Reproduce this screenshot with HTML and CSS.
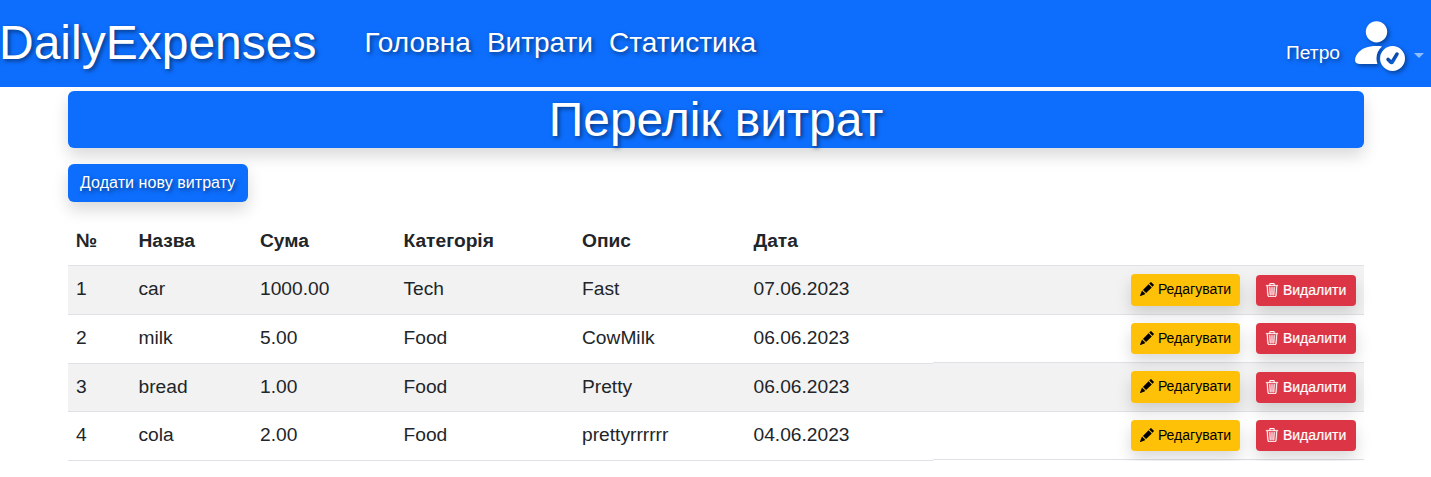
FILE: index.html
```html
<!DOCTYPE html>
<html lang="uk">
<head>
<meta charset="utf-8">
<title>DailyExpenses</title>
<link rel="stylesheet" href="styles.css">
</head>
<body>
<svg class="sprite" width="0" height="0" aria-hidden="true">
  <symbol id="pencil" viewBox="0 0 16 16"><path d="M12.854.146a.5.5 0 0 0-.707 0L10.5 1.793 14.207 5.5l1.647-1.646a.5.5 0 0 0 0-.708l-3-3zm.646 6.061L9.793 2.5 3.293 9H3.5a.5.5 0 0 1 .5.5v.5h.5a.5.5 0 0 1 .5.5v.5h.5a.5.5 0 0 1 .5.5v.5h.5a.5.5 0 0 1 .5.5v.207l6.5-6.5zm-7.468 7.468A.5.5 0 0 1 6 13.5V13h-.5a.5.5 0 0 1-.5-.5V12h-.5a.5.5 0 0 1-.5-.5V11h-.5a.5.5 0 0 1-.5-.5V10h-.5a.499.499 0 0 1-.175-.032l-.179.178a.5.5 0 0 0-.11.168l-2 5a.5.5 0 0 0 .65.65l5-2a.5.5 0 0 0 .168-.11l.178-.178z"/></symbol>
  <symbol id="trash" viewBox="0 0 16 16"><path d="M6.5 1h3a.5.5 0 0 1 .5.5v1H6v-1a.5.5 0 0 1 .5-.5ZM11 2.5v-1A1.5 1.5 0 0 0 9.5 0h-3A1.5 1.5 0 0 0 5 1.5v1H2.506a.58.58 0 0 0-.01 0H1.5a.5.5 0 0 0 0 1h.538l.853 10.66A2 2 0 0 0 4.885 16h6.23a2 2 0 0 0 1.994-1.84l.853-10.66h.538a.5.5 0 0 0 0-1h-.995a.59.59 0 0 0-.01 0H11Zm1.958 1-.846 10.58a1 1 0 0 1-.997.92h-6.23a1 1 0 0 1-.997-.92L3.042 3.5h9.916Zm-7.487 1a.5.5 0 0 1 .528.47l.5 8.5a.5.5 0 0 1-.998.06L5 5.03a.5.5 0 0 1 .47-.53Zm5.058 0a.5.5 0 0 1 .47.53l-.5 8.5a.5.5 0 1 1-.998-.06l.5-8.5a.5.5 0 0 1 .528-.47ZM8 4.5a.5.5 0 0 1 .5.5v8.5a.5.5 0 0 1-1 0V5a.5.5 0 0 1 .5-.5Z"/></symbol>
</svg>
<nav class="navbar">
  <a class="brand">DailyExpenses</a>
  <div class="links"><a>Головна</a><a>Витрати</a><a>Статистика</a></div>
  <div class="user">
    <span>Петро</span>
    <svg class="avatar" viewBox="0 0 16 16"><path d="M12.5 16a3.5 3.5 0 1 0 0-7 3.5 3.5 0 0 0 0 7Zm1.679-4.493-1.335 2.226a.75.75 0 0 1-1.174.144l-.774-.773a.5.5 0 0 1 .708-.708l.547.548 1.17-1.951a.5.5 0 1 1 .858.514ZM11 5a3 3 0 1 1-6 0 3 3 0 0 1 6 0Z"/><path d="M2 13c0 1 1 1 1 1h5.256A4.493 4.493 0 0 1 8 12.5a4.49 4.49 0 0 1 1.544-3.393C9.077 9.038 8.564 9 8 9c-5 0-6 3-6 4Z"/></svg>
    <i class="caret"></i>
  </div>
</nav>
<main class="container">
  <h1 class="title">Перелік витрат</h1>
  <a class="btn btn-primary">Додати нову витрату</a>
  <table class="table">
    <colgroup><col class="c-num"><col class="c-name"><col class="c-sum"><col class="c-cat"><col class="c-desc"><col class="c-date"><col></colgroup>
    <thead><tr><th>№</th><th>Назва</th><th>Сума</th><th>Категорія</th><th>Опис</th><th>Дата</th><th></th></tr></thead>
    <tbody>
      <tr><td>1</td><td>car</td><td>1000.00</td><td>Tech</td><td>Fast</td><td>07.06.2023</td><td><div class="actions"><a class="btn btn-sm btn-warning"><svg><use href="#pencil"/></svg> Редагувати</a><a class="btn btn-sm btn-danger"><svg><use href="#trash"/></svg> Видалити</a></div></td></tr>
      <tr><td>2</td><td>milk</td><td>5.00</td><td>Food</td><td>CowMilk</td><td>06.06.2023</td><td><div class="actions"><a class="btn btn-sm btn-warning"><svg><use href="#pencil"/></svg> Редагувати</a><a class="btn btn-sm btn-danger"><svg><use href="#trash"/></svg> Видалити</a></div></td></tr>
      <tr><td>3</td><td>bread</td><td>1.00</td><td>Food</td><td>Pretty</td><td>06.06.2023</td><td><div class="actions"><a class="btn btn-sm btn-warning"><svg><use href="#pencil"/></svg> Редагувати</a><a class="btn btn-sm btn-danger"><svg><use href="#trash"/></svg> Видалити</a></div></td></tr>
      <tr><td>4</td><td>cola</td><td>2.00</td><td>Food</td><td>prettyrrrrrr</td><td>04.06.2023</td><td><div class="actions"><a class="btn btn-sm btn-warning"><svg><use href="#pencil"/></svg> Редагувати</a><a class="btn btn-sm btn-danger"><svg><use href="#trash"/></svg> Видалити</a></div></td></tr>
    </tbody>
  </table>
</main>
</body>
</html>
```
FILE: styles.css
```css
* { box-sizing: border-box; }
body {
  margin: 0;
  background: #fff;
  color: #212529;
  font: 16px/1.5 "Liberation Sans", Arial, sans-serif;
  overflow: hidden;
}
.sprite { display: none; }

.navbar {
  display: flex;
  align-items: center;
  height: 87px;
  padding-bottom: 2px;
  background: #0d6efd;
  color: #fff;
  text-shadow: 2px 2px 4px rgba(0, 0, 0, .5);
}
.brand { margin: 0 48px 0 -1px; font-size: 48px; line-height: 72px; }
.links { display: flex; gap: 16px; font-size: 28px; padding-top: 1px; }
.user { display: flex; align-items: center; margin-left: auto; padding-right: 7px; font-size: 19.2px; }
.user span { padding-top: 21px; }
.avatar {
  width: 57px;
  height: 57px;
  margin: 0 0 1px 8px;
  fill: #fff;
  filter: drop-shadow(2px 2px 2px rgba(0, 0, 0, .4));
}
.caret {
  margin: 26px 0 0 9px;
  border: 5px solid transparent;
  border-top-color: rgba(255, 255, 255, .55);
  border-bottom: 0;
}

.container { width: 1296px; margin: 4px auto 0 68px; }
.title {
  margin: 0 0 16px;
  height: 57px;
  border-radius: 6px;
  background: #0d6efd;
  color: #fff;
  font-size: 48px;
  font-weight: 400;
  line-height: 57px;
  text-align: center;
  text-shadow: 2px 2px 4px rgba(0, 0, 0, .5);
  box-shadow: 0 8px 16px rgba(0, 0, 0, .15);
}

.btn {
  display: inline-block;
  vertical-align: top;
  padding: 7px 12px;
  border-radius: 6px;
  line-height: 24px;
  white-space: nowrap;
  box-shadow: 0 8px 16px rgba(0, 0, 0, .15);
}
.btn-primary {
  width: 180px;
  background: #0d6efd;
  color: #fff;
  letter-spacing: .06px;
  text-shadow: 2px 2px 4px rgba(0, 0, 0, .5);
}
.btn-sm { padding: 5px 9px; border-radius: 4px; font-size: 14px; line-height: 21px; }
.btn-sm svg { width: 14px; height: 14px; fill: currentColor; vertical-align: -1.75px; }
.btn-warning { width: 109px; background: #ffc107; color: #000; }
.btn-danger { width: 100px; background: #dc3545; color: #fff; -webkit-text-stroke: .2px #fff; }
.btn-danger svg { stroke: #fff; stroke-width: .35; overflow: visible; vertical-align: -1px; margin-bottom: -1px; }

.table {
  width: 100%;
  margin-top: 16px;
  table-layout: fixed;
  border-collapse: separate;
  border-spacing: 0;
  font-size: 19.2px;
}
.c-num { width: 62.5px; }
.c-name { width: 121.5px; }
.c-sum { width: 143.5px; }
.c-cat { width: 178.5px; }
.c-desc { width: 171.5px; }
.c-date { width: 187px; }
.table th, .table td {
  padding: 9px 8px 0;
  text-align: left;
  vertical-align: top;
  line-height: 28px;
  border-bottom: 1px solid #dee2e6;
}
.table td:last-child { padding-top: 8px; }
.table thead tr { height: 48px; }
.table tbody tr { height: 49px; }
.table tbody tr:nth-child(3) { height: 48px; }
.table tbody tr:nth-child(odd) { background: #f2f2f2; }
.table tbody tr:nth-child(odd) .btn-danger { margin-top: 1px; }
.table tbody tr:nth-child(3) td:last-child { padding-top: 7px; }
.table tbody tr:nth-child(odd) .btn-warning { height: 32px; }

/* The divider under the action cells of even rows sits one pixel higher. */
.table tbody tr:nth-child(even) td:last-child {
  border-bottom-color: #f2f2f2;
  box-shadow: inset 0 -1px #dee2e6;
}
.table tbody tr:last-child td:last-child { border-bottom-color: #fff; }

.actions { display: flex; justify-content: flex-end; align-items: flex-start; gap: 16px; }
```
